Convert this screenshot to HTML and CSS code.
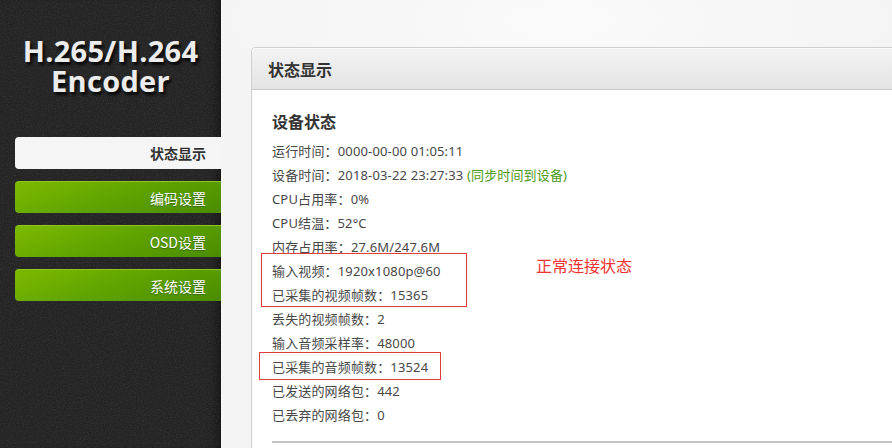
FILE: index.html
```html
<!DOCTYPE html>
<html lang="zh-CN">
<head>
<meta charset="utf-8">
<title>H.265/H.264 Encoder</title>
<link rel="stylesheet" href="styles.css">
</head>
<body>
<div class="page">
  <aside class="sidebar">
    <svg class="noise" width="221" height="448" aria-hidden="true">
      <filter id="grain">
        <feTurbulence type="fractalNoise" baseFrequency="0.85" numOctaves="2" seed="3"/>
        <feColorMatrix type="matrix" values="0 0 0 0 1  0 0 0 0 1  0 0 0 0 1  0 0 0 0.9 -0.35"/>
      </filter>
      <rect width="221" height="448" filter="url(#grain)" opacity="0.16"/>
    </svg>
    <div class="logo">
      <div class="logo-line">H.265/H.264</div>
      <div class="logo-line">Encoder</div>
    </div>
    <nav class="menu">
      <a class="item active">状态显示</a>
      <a class="item">编码设置</a>
      <a class="item">OSD设置</a>
      <a class="item">系统设置</a>
    </nav>
  </aside>
  <main class="main">
    <section class="panel">
      <header class="panel-head">状态显示</header>
      <div class="panel-body">
        <h2 class="section-title">设备状态</h2>
        <ul class="stats">
          <li>运行时间：0000-00-00 01:05:11</li>
          <li>设备时间：2018-03-22 23:27:33 <span class="sync">(同步时间到设备)</span></li>
          <li>CPU占用率：0%</li>
          <li>CPU结温：52°C</li>
          <li>内存占用率：27.6M/247.6M</li>
          <li>输入视频：1920x1080p@60</li>
          <li>已采集的视频帧数：15365</li>
          <li>丢失的视频帧数：2</li>
          <li>输入音频采样率：48000</li>
          <li>已采集的音频帧数：13524</li>
          <li>已发送的网络包：442</li>
          <li>已丢弃的网络包：0</li>
        </ul>
        <hr class="rule">
        <div class="mark mark-video"></div>
        <div class="mark mark-audio"></div>
        <div class="note">正常连接状态</div>
      </div>
    </section>
  </main>
</div>
</body>
</html>
```
FILE: styles.css
```css
* { box-sizing: border-box; }
html, body { margin: 0; padding: 0; }
body {
  width: 892px;
  height: 448px;
  overflow: hidden;
  font-family: "Noto Sans", "Noto Sans CJK SC", sans-serif;
  background: #f4f4f4;
}
.page {
  display: flex;
  height: 448px;
}
.sidebar {
  position: relative;
  width: 221px;
  flex: none;
  background: #242424;
  box-shadow: inset -10px 0 10px -6px rgba(0,0,0,0.45);
  padding-top: 36px;
}
.noise {
  position: absolute;
  left: 0;
  top: 0;
  pointer-events: none;
}
.logo {
  position: relative;
  display: flex;
  flex-direction: column;
  align-items: center;
  font-family: "Open Sans", "DejaVu Sans", sans-serif;
  font-weight: 700;
  font-size: 29px;
  color: #ececec;
  letter-spacing: 0.3px;
  text-shadow: 2px 3px 3px rgba(0,0,0,0.85);
}
.logo-line {
  height: 30px;
  line-height: 30px;
}
.menu {
  position: relative;
  display: flex;
  flex-direction: column;
  gap: 12px;
  margin-top: 41px;
  padding-left: 15px;
}
.item {
  display: block;
  height: 32px;
  line-height: 32px;
  padding-right: 15px;
  text-align: right;
  font-family: "Noto Sans CJK SC", "Noto Sans", sans-serif;
  font-size: 14px;
  color: #ffffff;
  border-radius: 4px 0 0 4px;
  border-top: 1px solid #93c41a;
  background: linear-gradient(160deg, #7cba00 0%, #5fa300 50%, #4a8c00 100%);
  text-shadow: 0 1px 1px rgba(0,0,0,0.3);
}
.item.active {
  border-top: none;
  background: #f5f5f5;
  color: #333;
  font-weight: 700;
  text-shadow: none;
}
.main {
  flex: 1;
  min-width: 0;
  overflow: hidden;
  padding: 47px 0 0 30px;
  background: radial-gradient(ellipse 360px 120px at 340px 20px, #fafafa 0%, #f4f4f4 100%);
}
.panel {
  width: 680px;
  height: 420px;
  background: #ffffff;
  border: 1px solid #cfcfcf;
  border-radius: 4px 0 0 0;
}
.panel-head {
  height: 42px;
  line-height: 40px;
  padding-left: 16px;
  font-family: "Noto Sans CJK SC", sans-serif;
  font-size: 16px;
  font-weight: 700;
  color: #333;
  background: linear-gradient(#f3f3f3, #e4e4e4);
  border-top: 1px solid #fafafa;
  border-bottom: 1px solid #c9c9c9;
  border-radius: 4px 0 0 0;
}
.panel-body {
  position: relative;
  padding: 19px 0 0 20px;
}
.section-title {
  margin: 0 0 6px;
  font-family: "Noto Sans CJK SC", sans-serif;
  font-size: 16px;
  line-height: 24px;
  font-weight: 700;
  color: #333;
}
.stats {
  list-style: none;
  margin: 0;
  padding: 0;
  font-size: 13px;
  line-height: 24px;
  color: #484848;
  letter-spacing: 0.15px;
}
.sync { color: #4c9a17; }
.rule {
  margin: 14px 0 0;
  border: none;
  border-top: 2px solid #c4c4c4;
}
.mark {
  position: absolute;
  border: 1px solid #e53a3a;
}
.mark-video {
  left: 9px;
  top: 163px;
  width: 206px;
  height: 54px;
}
.mark-audio {
  left: 7px;
  top: 262px;
  width: 182px;
  height: 28px;
}
.note {
  position: absolute;
  left: 284px;
  top: 165px;
  font-family: "Noto Sans CJK SC", sans-serif;
  font-size: 16px;
  line-height: 20px;
  color: #f03232;
}
```
